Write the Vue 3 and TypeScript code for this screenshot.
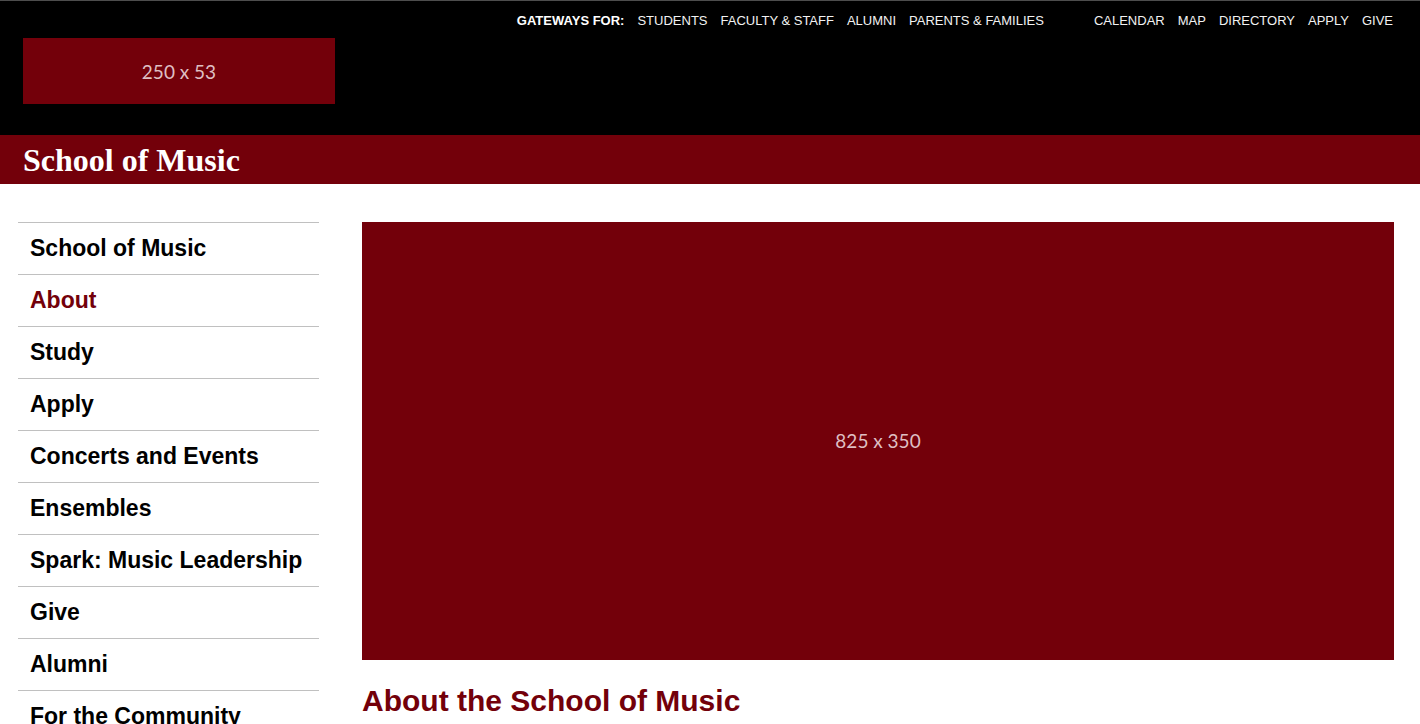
<script setup lang="ts">
interface NavLink {
  label: string
  current?: boolean
}

const gateways: string[] = ['Students', 'Faculty & Staff', 'Alumni', 'Parents & Families']
const utilities: string[] = ['Calendar', 'Map', 'Directory', 'Apply', 'Give']

const sections: NavLink[] = [
  { label: 'School of Music' },
  { label: 'About', current: true },
  { label: 'Study' },
  { label: 'Apply' },
  { label: 'Concerts and Events' },
  { label: 'Ensembles' },
  { label: 'Spark: Music Leadership' },
  { label: 'Give' },
  { label: 'Alumni' },
  { label: 'For the Community' },
]
</script>

<template>
  <div class="page">
    <header class="masthead">
      <a class="logo placeholder" href="#">250 x 53</a>
      <div class="top-links">
        <nav class="link-row" aria-label="Gateways">
          <strong>Gateways for:</strong>
          <a v-for="item in gateways" :key="item" href="#">{{ item }}</a>
        </nav>
        <nav class="link-row" aria-label="Utilities">
          <a v-for="item in utilities" :key="item" href="#">{{ item }}</a>
        </nav>
      </div>
    </header>

    <div class="banner"><a href="#">School of Music</a></div>

    <div class="content">
      <nav class="sidebar" aria-label="Section">
        <ul>
          <li v-for="item in sections" :key="item.label">
            <a href="#" :class="{ current: item.current }" :aria-current="item.current ? 'page' : undefined">{{ item.label }}</a>
          </li>
        </ul>
      </nav>
      <main class="main">
        <div class="hero placeholder">825 x 350</div>
        <h1>About the School of Music</h1>
      </main>
    </div>
  </div>
</template>

<style>
body {
  margin: 0;
  overflow: hidden;
  background: #fff;
}
</style>

<style scoped>
.page {
  font-family: "Liberation Sans", Arial, sans-serif;
  color: #000;
}

a {
  color: inherit;
  text-decoration: none;
}

.masthead {
  display: flex;
  justify-content: space-between;
  align-items: flex-start;
  border-top: 1px solid #4d4d4d;
  padding: 0 27px 31px 23px;
  background: #000;
}

.placeholder {
  display: flex;
  align-items: center;
  justify-content: center;
  background: #73000a;
  color: #dfbfc2;
  font-family: Lato, sans-serif;
  font-size: 19px;
}

.logo {
  width: 312px;
  height: 66px;
  margin-top: 37px;
}

.top-links {
  display: flex;
  gap: 50px;
  padding-top: 12px;
  color: #f2f2f2;
  font-size: 13px;
  line-height: 16px;
  text-transform: uppercase;
}

.link-row {
  display: flex;
  gap: 13px;
  white-space: nowrap;
}

.link-row strong {
  color: #fff;
}

.banner {
  padding: 1px 23px 0;
  background: #73000a;
  color: #fff;
  font: bold 32px/48px "Liberation Serif", "Times New Roman", serif;
}

.content {
  display: flex;
  gap: 43px;
  align-items: flex-start;
  padding: 38px 26px 0 18px;
}

.sidebar {
  flex: 0 0 301px;
}

.sidebar ul {
  margin: 0;
  padding: 0;
  list-style: none;
}

.sidebar li {
  border-top: 1px solid #c0c0c0;
}

.sidebar a {
  display: block;
  padding: 12px;
  font-size: 23px;
  line-height: 27px;
  font-weight: bold;
  white-space: nowrap;
}

.sidebar .current {
  color: #73000a;
}

.main {
  flex: 1;
  min-width: 0;
}

.hero {
  aspect-ratio: 825 / 350;
}

h1 {
  margin: 23px 0;
  color: #73000a;
  font-size: 30px;
  line-height: 36px;
}
</style>
